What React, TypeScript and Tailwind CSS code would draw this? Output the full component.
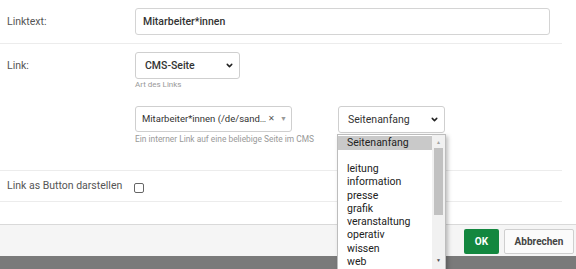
import { ChevronDown } from 'lucide-react';

const pages = ['leitung', 'information', 'presse', 'grafik', 'veranstaltung', 'operativ', 'wissen', 'web'];

export default function App() {
  return (
    <div className="relative w-[576px] h-[269px] bg-white overflow-hidden flex flex-col font-['Roboto',sans-serif] text-[10.5px] text-[#333]">
      {/* Form rows */}
      <div className="pr-[14px]">
        <div className="flex items-center h-[44px] border-b border-[#ececec]">
          <label className="w-[135px] pl-[7px] text-[#555]">Linktext:</label>
          <div className="flex-1 mr-[12px] h-[27px] border border-[#d4d4d4] rounded-[3px] flex items-center px-[7px] font-medium">
            Mitarbeiter*innen
          </div>
        </div>

        <div className="flex h-[127px] border-b border-[#ececec] pt-[8px]">
          <label className="w-[135px] pl-[7px] pt-[6px] text-[#555]">Link:</label>
          <div className="flex flex-col">
            <SelectBox label="CMS-Seite" width="w-[105px]" bold />
            <span className="mt-[1px] text-[8px] leading-[10px] text-[#999]">Art des Links</span>
            <div className="flex items-start gap-[46px] mt-[16px]">
              <div className="w-[157px] flex flex-col">
                <div className="w-[157px] h-[26px] border border-[#cfcfcf] rounded-[3px] flex items-center pl-[6px] pr-[4px] text-[9.5px]">
                  <span className="flex-1 truncate">Mitarbeiter*innen (/de/sand…</span>
                  <span className="text-[#555] text-[8px] ml-[1px]">✕</span>
                  <span className="text-[#999] text-[7px] ml-[5px]">▼</span>
                </div>
                <span className="mt-[2px] text-[8.4px] leading-[10px] text-[#999] whitespace-nowrap">
                  Ein interner Link auf eine beliebige Seite im CMS
                </span>
              </div>
              <SelectBox label="Seitenanfang" width="w-[107px]" />
            </div>
          </div>
        </div>

        <div className="flex items-center h-[31px] border-b border-[#ececec]">
          <label className="w-[134px] pl-[7px] text-[#555]">Link as Button darstellen</label>
          <span className="w-[10px] h-[10px] border border-[#666] rounded-[2px] bg-white mt-[3px]" />
        </div>
      </div>

      <div className="h-[22px]" />

      {/* Footer */}
      <div className="h-[32px] border-t border-[#d9d9d9] bg-[#f5f5f5] flex items-start justify-end gap-[5px] pt-[4px] pr-[2px]">
        <button className="h-[25px] w-[35px] bg-[#13873f] text-white font-bold text-[10px] rounded-[2px]">OK</button>
        <button className="h-[25px] w-[70px] bg-[#fbfbfb] border border-[#cfcfcf] text-[#444] font-bold text-[10px] rounded-[2px]">
          Abbrechen
        </button>
      </div>
      <div className="flex-1 bg-[#7a7a7a]" />

      {/* Open dropdown list */}
      <div className="absolute left-[337px] top-[134px] w-[109px] h-[140px] bg-white border border-[#bdbdbd] shadow-[2px_2px_4px_rgba(0,0,0,0.25)] flex">
        <div className="flex-1 flex flex-col pt-[1px] text-[#222] leading-[13.3px]">
          <div className="bg-[#c9c9c9] pl-[9px] h-[13.5px]">Seitenanfang</div>
          <div className="h-[12.5px]" />
          {pages.map(p => (
            <div key={p} className="pl-[9px]">{p}</div>
          ))}
        </div>
        <div className="w-[13px] bg-[#f1f1f1] flex flex-col items-center">
          <span className="text-[5px] text-[#a3a3a3] mt-[4px] leading-[6px]">▲</span>
          <div className="w-[9px] h-[67px] bg-[#c1c1c1] mt-[3px]" />
          <div className="flex-1" />
          <span className="text-[5px] text-[#505050] mb-[10px] leading-[6px]">▼</span>
        </div>
      </div>
    </div>
  );
}

function SelectBox({ label, width, bold = false }: { label: string; width: string; bold?: boolean }) {
  return (
    <div className={`${width} h-[27px] border border-[#cfcfcf] rounded-[3px] flex items-center justify-between pl-[9px] pr-[5px] bg-white ${bold ? 'font-medium' : ''}`}>
      <span>{label}</span>
      <ChevronDown size={9} strokeWidth={4} color="#222" />
    </div>
  );
}
